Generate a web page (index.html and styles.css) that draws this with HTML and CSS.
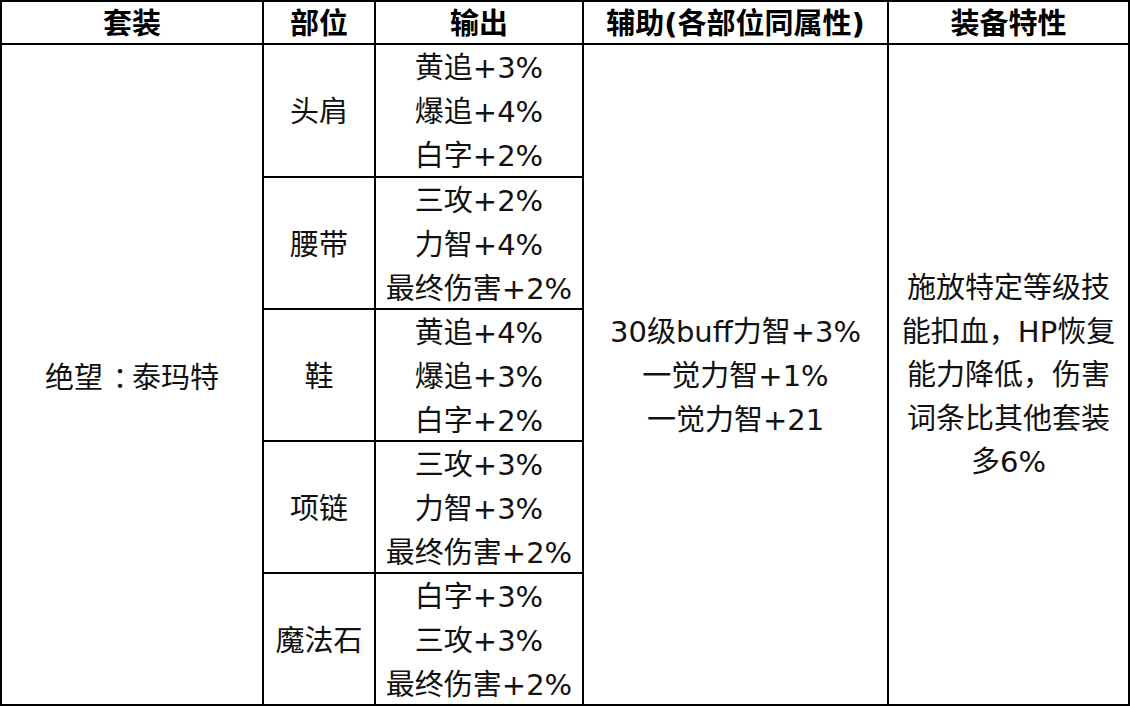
FILE: index.html
```html
<!DOCTYPE html>
<html lang="zh-CN">
<head>
<meta charset="utf-8">
<title>绝望：泰玛特</title>
<link rel="stylesheet" href="styles.css">
</head>
<body>
<div class="grid">
  <div class="cell head">套装</div>
  <div class="cell head">部位</div>
  <div class="cell head">输出</div>
  <div class="cell head">辅助(各部位同属性)</div>
  <div class="cell head">装备特性</div>

  <div class="cell set"><div>绝望<span class="colon">：</span>泰玛特</div></div>

  <div class="cell part r1">头肩</div>
  <div class="cell out r1"><div>黄追+3%</div><div>爆追+4%</div><div>白字+2%</div></div>

  <div class="cell support"><div>30级buff力智+3%</div><div>一觉力智+1%</div><div>一觉力智+21</div></div>
  <div class="cell trait"><div class="trait-text">施放特定等级技能扣血，HP恢复能力降低，伤害词条比其他套装多6%</div></div>

  <div class="cell part r2">腰带</div>
  <div class="cell out r2"><div>三攻+2%</div><div>力智+4%</div><div>最终伤害+2%</div></div>

  <div class="cell part r3">鞋</div>
  <div class="cell out r3"><div>黄追+4%</div><div>爆追+3%</div><div>白字+2%</div></div>

  <div class="cell part r4">项链</div>
  <div class="cell out r4"><div>三攻+3%</div><div>力智+3%</div><div>最终伤害+2%</div></div>

  <div class="cell part r5">魔法石</div>
  <div class="cell out r5"><div>白字+3%</div><div>三攻+3%</div><div>最终伤害+2%</div></div>
</div>
</body>
</html>
```

FILE: styles.css
```css
html, body {
  margin: 0;
  padding: 0;
  background: #ffffff;
}

.grid {
  box-sizing: border-box;
  width: 1130px;
  height: 706px;
  display: grid;
  grid-template-columns: 262px 112px 208px 305px 241px;
  grid-template-rows: 43px 133px 132px 132px 132px 132px;
  border-top: 2px solid #000;
  border-left: 2px solid #000;
  font-family: "DejaVu Sans", "Noto Sans CJK SC", sans-serif;
  font-size: 29px;
  color: #111;
}

.cell {
  box-sizing: border-box;
  border-right: 2px solid #000;
  border-bottom: 2px solid #000;
  display: flex;
  flex-direction: column;
  align-items: center;
  justify-content: center;
  text-align: center;
  line-height: 44px;
  padding-top: 3px;
}

.head {
  font-weight: 700;
  color: #000;
  line-height: 41px;
  padding-top: 3px;
}

.colon {
  padding-left: 0.34em;
  letter-spacing: -0.34em;
  font-family: "Noto Sans CJK SC", sans-serif;
}

.set {
  grid-column: 1;
  grid-row: 2 / 7;
}

.support {
  grid-column: 4;
  grid-row: 2 / 7;
}

.trait {
  grid-column: 5;
  grid-row: 2 / 7;
  padding-left: 8px;
  padding-right: 8px;
}

.trait-text {
  line-height: 43.6px;
}

.part { grid-column: 2; }
.out { grid-column: 3; }

.r1 { grid-row: 2; }
.r2 { grid-row: 3; }
.r3 { grid-row: 4; }
.r4 { grid-row: 5; }
.r5 { grid-row: 6; }
```
